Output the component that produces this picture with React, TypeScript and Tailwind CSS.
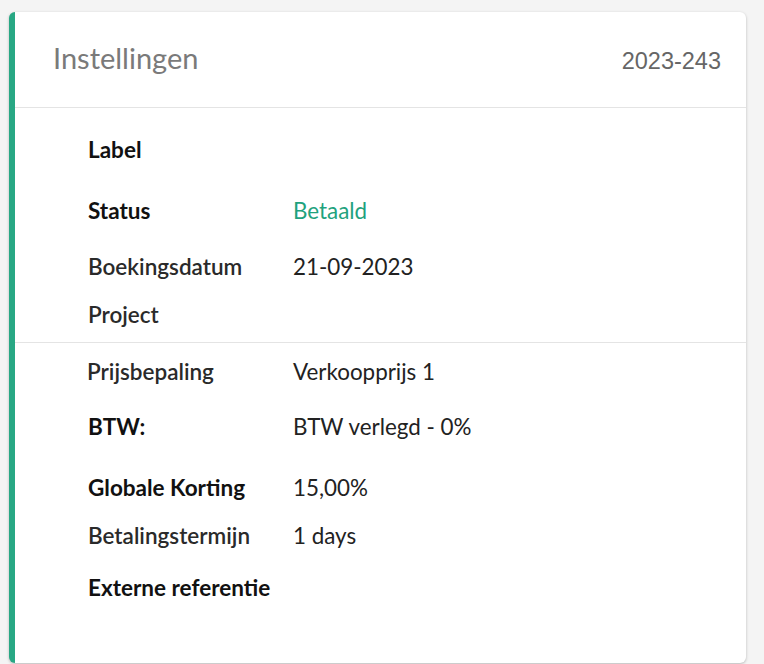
import React from "react";

const Row = ({
  label,
  value,
  strong = true,
  valueClass = "text-[#222]",
  className = "",
  labelClass = "",
}: {
  label: string;
  value?: string;
  strong?: boolean;
  valueClass?: string;
  className?: string;
  labelClass?: string;
}) => (
  <div className={`flex h-[28px] items-center ${className}`}>
    <div
      className={`w-[205px] shrink-0 whitespace-nowrap text-[22.5px] ${
        strong ? "font-bold text-[#111]" : "font-semibold text-[#2a2a2a]"
      } ${labelClass}`}
    >
      {label}
    </div>
    {value && <div className={`whitespace-nowrap text-[22.4px] ${valueClass}`}>{value}</div>}
  </div>
);

export default function App() {
  return (
    <div
      className="min-h-[664px] w-[764px] bg-[#f4f4f4] pl-[9px] pt-[12px]"
      style={{ fontFamily: "Lato, 'Noto Sans', sans-serif" }}
    >
      <div className="w-[737px] overflow-hidden rounded-[6px] border-l-[6px] border-[#28a884] bg-white shadow-[0_1px_3px_rgba(0,0,0,0.25)]">
        <div className="flex h-[96px] items-center justify-between border-b border-[#e4e4e4] pl-[38px] pr-[25px]">
          <div className="mt-[-4px] text-[29px] text-[#7a7a7a]">Instellingen</div>
          <div
            className="mt-[4px] text-[23.5px] text-[#666]"
            style={{ fontFamily: "'Liberation Sans', Arial, sans-serif" }}
          >
            2023-243
          </div>
        </div>
        <div className="border-b border-[#e4e4e4] pb-[13px] pl-[73px] pt-[28px]">
          <Row label="Label" />
          <Row label="Status" value="Betaald" valueClass="text-[#1fa27e]" className="mt-[33px]" />
          <Row label="Boekingsdatum" value="21-09-2023" strong={false} className="mt-[28px]" />
          <Row label="Project" strong={false} className="mt-[20px]" />
        </div>
        <div className="pb-[61px] pl-[73px] pt-[15px]">
          <Row
            label="Prijsbepaling"
            value="Verkoopprijs 1"
            strong={false}
            labelClass="ml-[-1px] mr-[1px]"
          />
          <Row label="BTW:" value="BTW verlegd - 0%" className="mt-[27px]" />
          <Row label="Globale Korting" value="15,00%" className="mt-[33px]" />
          <Row label="Betalingstermijn" value="1 days" strong={false} className="mt-[20px]" />
          <Row label="Externe referentie" className="mt-[24px]" />
        </div>
      </div>
    </div>
  );
}
